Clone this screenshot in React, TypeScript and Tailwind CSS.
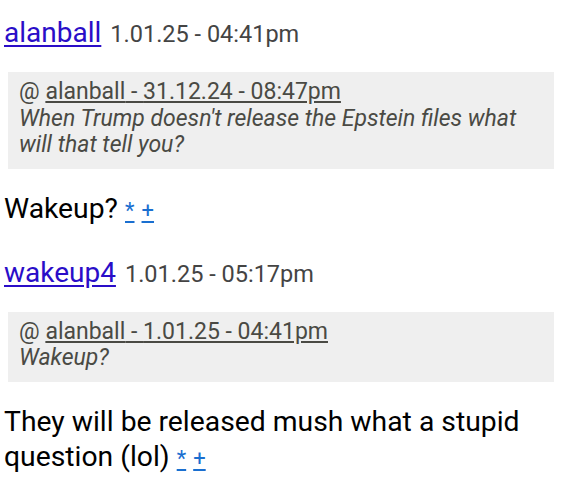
import React from "react";

type Quote = { user: string; when: string; text: string };
type Post = { user: string; when: string; quote: Quote; body: string };

const posts: Post[] = [
  {
    user: "alanball",
    when: "1.01.25 - 04:41pm",
    quote: {
      user: "alanball",
      when: "31.12.24 - 08:47pm",
      text: "When Trump doesn't release the Epstein files what will that tell you?",
    },
    body: "Wakeup?",
  },
  {
    user: "wakeup4",
    when: "1.01.25 - 05:17pm",
    quote: { user: "alanball", when: "1.01.25 - 04:41pm", text: "Wakeup?" },
    body: "They will be released mush what a stupid question (lol)",
  },
];

function PostItem({ post }: { post: Post }) {
  return (
    <div className="mb-[27px]">
      <div className="flex items-baseline gap-[9px] leading-[36px]">
        <a href="#" className="text-[28px] text-[#2a0dc8] underline underline-offset-[3px]">
          {post.user}
        </a>
        <span className="text-[23.5px] text-[#444444]">{post.when}</span>
      </div>
      <div className="mt-[20px] ml-1 mr-[10px] bg-[#efefef] px-[11px] pt-[7px] pb-[10px] text-[23px] leading-[26.5px] text-[#4a4a44]">
        <div>
          @{" "}
          <a href="#" className="underline underline-offset-[2px]">
            {post.quote.user} - {post.quote.when}
          </a>
        </div>
        <div className="italic">{post.quote.text}</div>
      </div>
      <p className="mt-[22px] text-[28.3px] leading-[35px] text-black">
        {post.body}{" "}
        <a href="#" className="text-[22px] text-[#1a6fd0] underline underline-offset-[3px]">*</a>{" "}
        <a href="#" className="text-[22px] text-[#1a6fd0] underline underline-offset-[3px]">+</a>
      </p>
    </div>
  );
}

export default function App() {
  return (
    <div
      className="min-h-[480px] w-[564px] bg-white pt-[15px] pl-1"
      style={{ fontFamily: "Roboto, 'Noto Sans', sans-serif" }}
    >
      {posts.map((p, i) => (
        <PostItem key={i} post={p} />
      ))}
    </div>
  );
}
